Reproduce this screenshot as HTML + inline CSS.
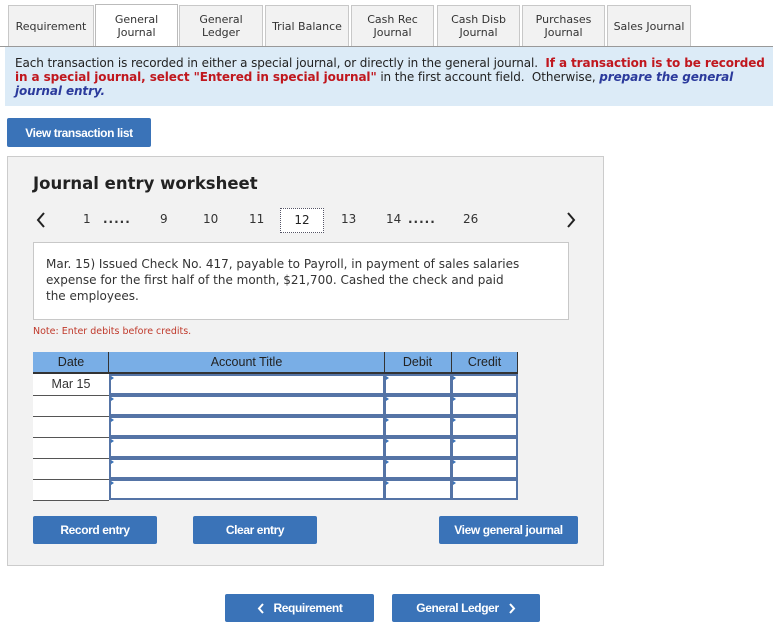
<!DOCTYPE html>
<html><head><style>
*{margin:0;padding:0;box-sizing:border-box}
body{width:781px;height:639px;background:#fff;position:relative;font-family:"DejaVu Sans","Liberation Sans",sans-serif;color:#222;overflow:hidden}
.a{position:absolute}
.tab{position:absolute;top:5px;height:41px;background:#f2f2f2;border:1px solid #c8c8c8;border-bottom:none;font-size:11px;color:#333;display:flex;align-items:center;justify-content:center;text-align:center;line-height:13px}
.tab.act{background:#fff;top:4px;height:43px;border-color:#bbb}
.btn{position:absolute;background:#3a73b8;color:#fff;font-family:"Liberation Sans",sans-serif;font-weight:bold;font-size:12px;letter-spacing:-0.4px;display:flex;align-items:center;justify-content:center;border-radius:2px}
.pg{position:absolute;top:212px;font-size:12px;color:#333}
</style></head><body>
<div class="tab" style="left:8px;width:86px">Requirement</div>
<div class="tab act" style="left:95px;width:83px">General<br>Journal</div>
<div class="tab" style="left:179px;width:84px">General<br>Ledger</div>
<div class="tab" style="left:265px;width:84px">Trial Balance</div>
<div class="tab" style="left:351px;width:83px">Cash Rec<br>Journal</div>
<div class="tab" style="left:437px;width:83px">Cash Disb<br>Journal</div>
<div class="tab" style="left:522px;width:83px">Purchases<br>Journal</div>
<div class="tab" style="left:607px;width:84px">Sales Journal</div>
<div class="a" style="left:0;top:46px;width:773px;height:1px;background:#999"></div>
<div class="a" style="left:5px;top:47px;width:768px;height:59px;background:#dcebf7;font-size:12px;letter-spacing:-0.1px;line-height:14px;padding:9px 0 0 10px;color:#222;white-space:nowrap">Each transaction is recorded in either a special journal, or directly in the general journal. &nbsp;<b style="color:#c0171e">If a transaction is to be recorded<br>in a special journal, select "Entered in special journal"</b> in the first account field. &nbsp;Otherwise, <b><i style="color:#2b3a9c">prepare the general<br>journal entry.</i></b></div>
<div class="btn" style="left:7px;top:118px;width:144px;height:29px">View transaction list</div>

<div class="a" style="left:7px;top:156px;width:597px;height:410px;background:#f2f2f2;border:1px solid #ccc"></div>
<div class="a" style="left:33px;top:174px;font-size:16.5px;font-weight:bold;color:#222">Journal entry worksheet</div>
<svg class="a" style="left:36px;top:212px" width="10" height="16"><path d="M8 1L2 8l6 7" fill="none" stroke="#222" stroke-width="2"/></svg>
<svg class="a" style="left:566px;top:212px" width="10" height="16"><path d="M2 1l6 7-6 7" fill="none" stroke="#222" stroke-width="2"/></svg>
<div class="pg" style="left:83px">1</div>
<div class="pg" style="left:103px;font-weight:bold;letter-spacing:1px">.....</div>
<div class="pg" style="left:160px">9</div>
<div class="pg" style="left:203px">10</div>
<div class="pg" style="left:249px">11</div>
<div class="a" style="left:280px;top:208px;width:44px;height:25px;background:#fff;border:1px dotted #556;font-size:12px;text-align:center;line-height:23px">12</div>
<div class="pg" style="left:341px">13</div>
<div class="pg" style="left:386px">14</div>
<div class="pg" style="left:408px;font-weight:bold;letter-spacing:1px">.....</div>
<div class="pg" style="left:463px">26</div>
<div class="a" style="left:33px;top:242px;width:536px;height:78px;background:#fff;border:1px solid #c8c8c8;font-size:12px;line-height:16px;padding:13px 10px 0 12px;color:#333">Mar. 15) Issued Check No. 417, payable to Payroll, in payment of sales salaries<br>expense for the first half of the month, $21,700. Cashed the check and paid<br>the employees.</div>
<div class="a" style="left:33px;top:326px;font-size:9.5px;color:#c0392b">Note: Enter debits before credits.</div>

<div class="a" style="left:33px;top:352px;width:485px;height:22px;background:#79aee6;border-bottom:2px solid #333"></div>
<div class="a" style="left:108px;top:352px;width:1px;height:22px;background:#333"></div>
<div class="a" style="left:384px;top:352px;width:1px;height:22px;background:#333"></div>
<div class="a" style="left:451px;top:352px;width:1px;height:22px;background:#333"></div>
<div class="a" style="left:517px;top:352px;width:1px;height:22px;background:#333"></div>
<div class="a" style="left:33px;top:355px;width:76px;text-align:center;font-family:'Liberation Sans';font-size:12.5px">Date</div>
<div class="a" style="left:109px;top:355px;width:275px;text-align:center;font-family:'Liberation Sans';font-size:12.5px">Account Title</div>
<div class="a" style="left:384px;top:355px;width:67px;text-align:center;font-family:'Liberation Sans';font-size:12.5px">Debit</div>
<div class="a" style="left:451px;top:355px;width:67px;text-align:center;font-family:'Liberation Sans';font-size:12.5px">Credit</div>
<div class="a" style="left:33px;top:374px;width:76px;height:127px;background:#fff"></div>
<div class="a" style="left:33px;top:377px;width:76px;text-align:center;font-family:'Liberation Sans';font-size:12.5px;color:#333">Mar 15</div>
<div class="a" style="left:33px;top:395px;width:76px;height:1px;background:#555"></div>
<div class="a" style="left:33px;top:416px;width:76px;height:1px;background:#555"></div>
<div class="a" style="left:33px;top:437px;width:76px;height:1px;background:#555"></div>
<div class="a" style="left:33px;top:458px;width:76px;height:1px;background:#555"></div>
<div class="a" style="left:33px;top:479px;width:76px;height:1px;background:#555"></div>
<div class="a" style="left:33px;top:500px;width:76px;height:1px;background:#555"></div>
<svg class="a" style="left:108px;top:374px" width="411" height="128">
<g fill="#fff" stroke="#5574a6" stroke-width="2">
<rect x="2" y="1" width="274" height="19"/><rect x="277" y="1" width="66" height="19"/><rect x="344" y="1" width="65" height="19"/>
<rect x="2" y="22" width="274" height="19"/><rect x="277" y="22" width="66" height="19"/><rect x="344" y="22" width="65" height="19"/>
<rect x="2" y="43" width="274" height="19"/><rect x="277" y="43" width="66" height="19"/><rect x="344" y="43" width="65" height="19"/>
<rect x="2" y="64" width="274" height="19"/><rect x="277" y="64" width="66" height="19"/><rect x="344" y="64" width="65" height="19"/>
<rect x="2" y="85" width="274" height="19"/><rect x="277" y="85" width="66" height="19"/><rect x="344" y="85" width="65" height="19"/>
<rect x="2" y="106" width="274" height="19"/><rect x="277" y="106" width="66" height="19"/><rect x="344" y="106" width="65" height="19"/>
</g>
<g fill="#3a73b8">
<path d="M3 2l3 2-3 2z"/><path d="M278 2l3 2-3 2z"/><path d="M345 2l3 2-3 2z"/>
<path d="M3 23l3 2-3 2z"/><path d="M278 23l3 2-3 2z"/><path d="M345 23l3 2-3 2z"/>
<path d="M3 44l3 2-3 2z"/><path d="M278 44l3 2-3 2z"/><path d="M345 44l3 2-3 2z"/>
<path d="M3 65l3 2-3 2z"/><path d="M278 65l3 2-3 2z"/><path d="M345 65l3 2-3 2z"/>
<path d="M3 86l3 2-3 2z"/><path d="M278 86l3 2-3 2z"/><path d="M345 86l3 2-3 2z"/>
<path d="M3 107l3 2-3 2z"/><path d="M278 107l3 2-3 2z"/><path d="M345 107l3 2-3 2z"/>
</g></svg>

<div class="btn" style="left:33px;top:516px;width:124px;height:28px">Record entry</div>
<div class="btn" style="left:193px;top:516px;width:124px;height:28px">Clear entry</div>
<div class="btn" style="left:439px;top:516px;width:139px;height:28px">View general journal</div>

<div class="btn" style="left:225px;top:594px;width:149px;height:28px"><svg width="8" height="11" style="margin-right:9px"><path d="M6 1L2 5.5 6 10" fill="none" stroke="#fff" stroke-width="2"/></svg>Requirement</div>
<div class="btn" style="left:392px;top:594px;width:148px;height:28px">General Ledger<svg width="8" height="11" style="margin-left:9px"><path d="M2 1l4 4.5L2 10" fill="none" stroke="#fff" stroke-width="2"/></svg></div>
</body></html>
